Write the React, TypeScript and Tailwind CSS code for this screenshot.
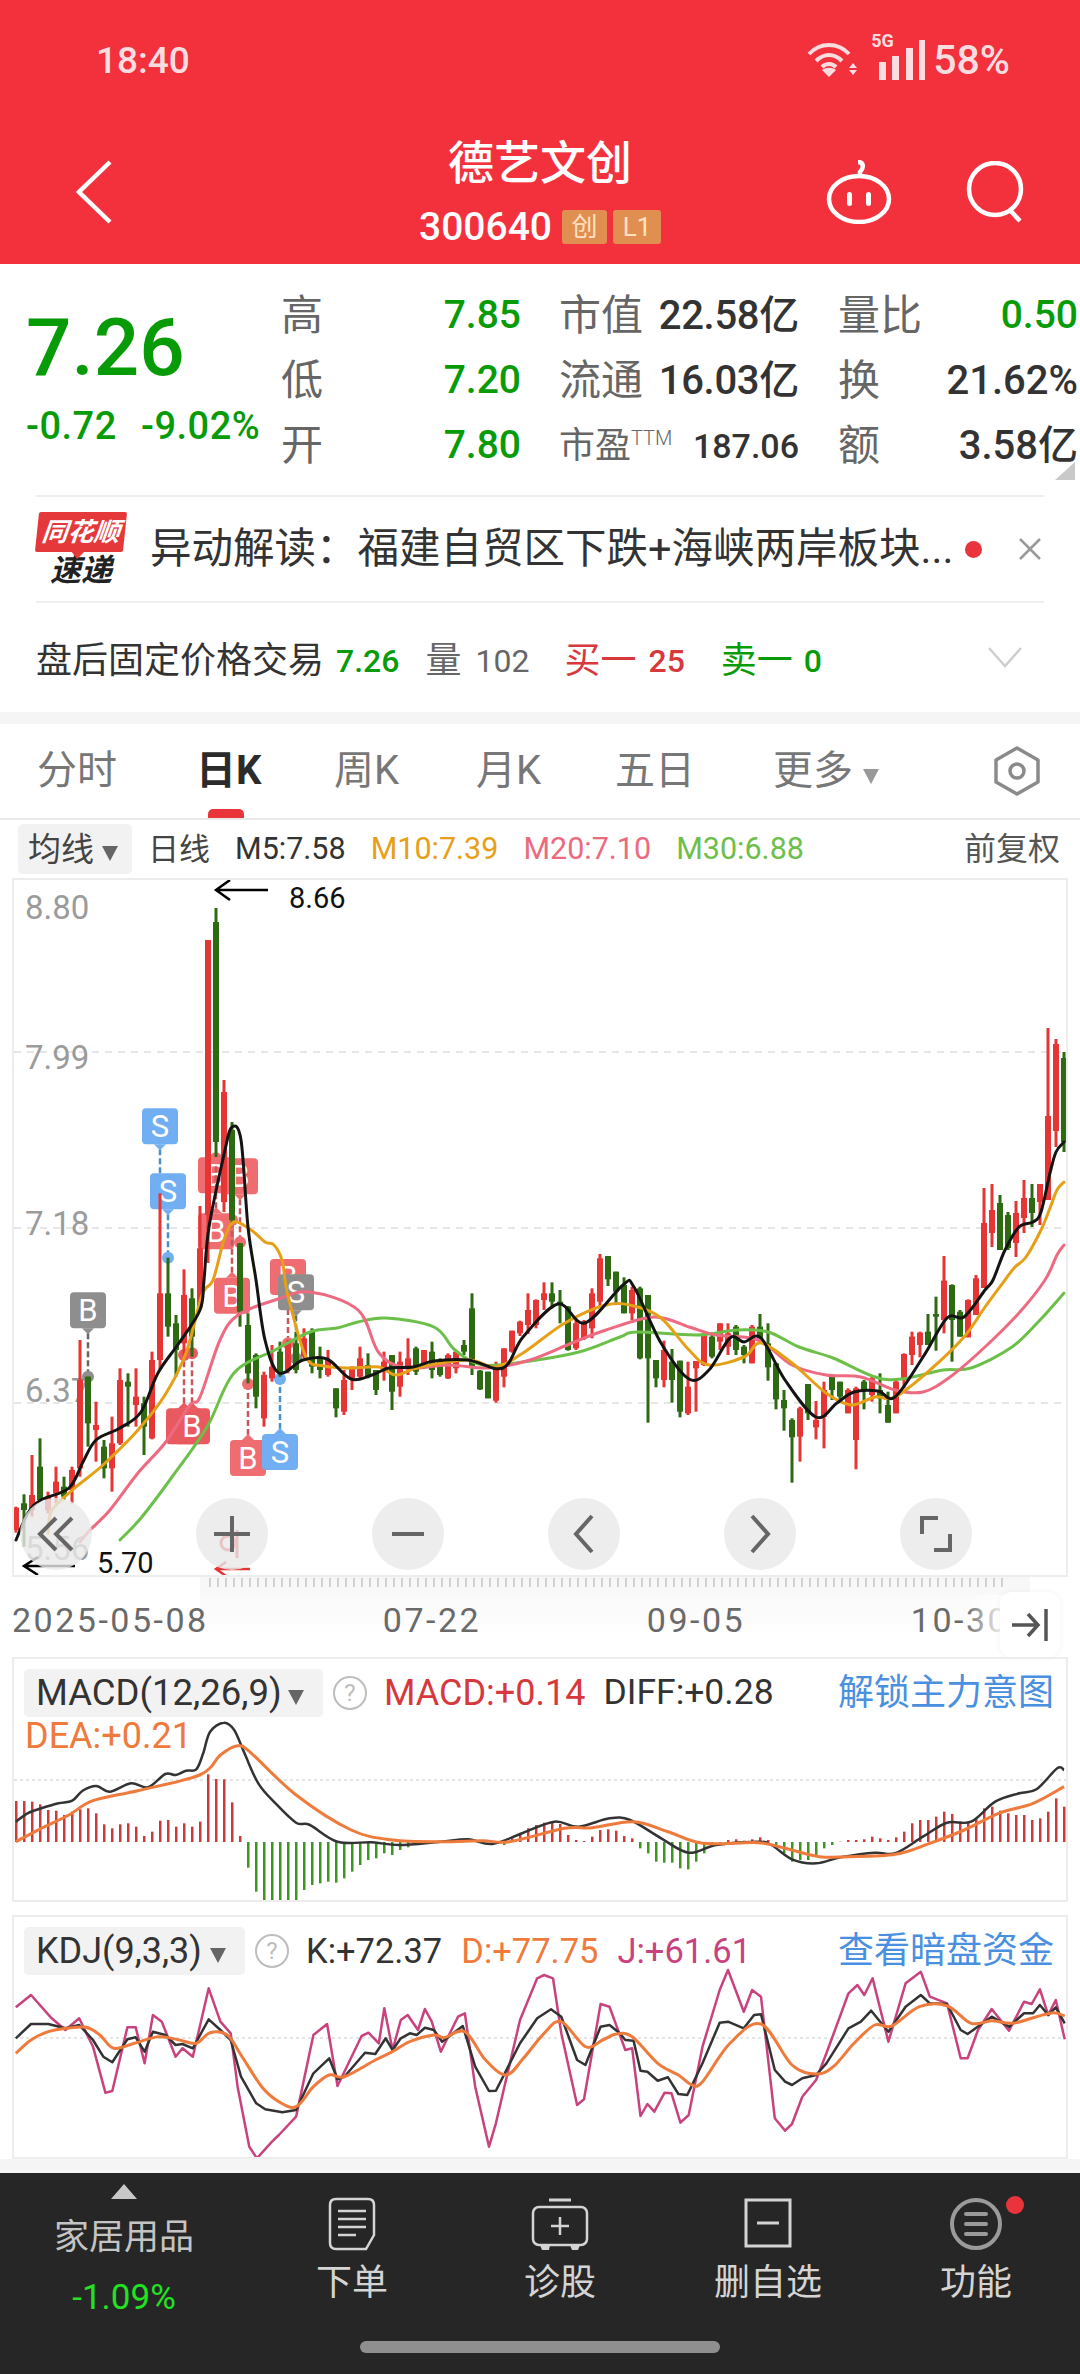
import React from "react";

type Pt = [number, number];
type C = [string, number, number, number, number];

const c9: C[] = [
  ["r",1280,1283,1350,1358],["g",1243,1270,1290,1400],["r",1125,1245,1290,1310],["g",1075,1160,1260,1265],
  ["r",1235,1250,1290,1300],["r",1160,1205,1240,1270],["g",1190,1220,1250,1260],["r",1160,1170,1230,1270],
  ["r",780,900,1165,1190],["g",890,890,1030,1100],["r",965,1035,1050,1145],["g",1080,1100,1165,1195],
  ["r",1010,1090,1165,1235],["r",865,900,1090,1095],["g",880,905,920,1040],["r",865,950,975,1040],
  ["g",950,970,1040,1125],["r",815,840,1075,1078],["r",340,640,840,870],["g",533,640,740,770],
  ["g",705,730,810,890],["r",568,645,790,830],["g",625,655,770,830],["r",378,505,680,685],
  ["r",-420,-420,405,549],["g",-516,-474,186,231],["r",0,36,366,396],["g",126,150,420,430],
  ["g",490,490,695,740],["g",700,735,880,910],["g",820,825,950,985],["r",875,885,1015,1040],
  ["r",795,860,895,905],["g",785,815,880,890],["r",780,790,870,880],["g",755,790,870,880],
  ["r",745,775,830,835],["g",745,755,860,880],["g",800,830,870,895],["r",810,840,885,890],
  ["g",925,925,985,1012],["r",870,900,995,1005],
];

const c10: C[] = [
  ["r",410,410,445,480],["r",350,385,440,445],["g",370,405,440,445],["g",420,420,480,495],["r",365,395,425,452],
  ["g",375,375,485,540],["r",365,395,470,500],["r",325,385,410,435],["g",350,355,425,435],["r",360,360,410,412],
  ["g",335,365,420,445],["g",385,390,435,440],["r",370,375,445,447],["r",365,365,415,430],["g",330,345,365,375],
  ["g",190,235,410,435],["g",420,422,478,480],["g",425,425,505,505],["r",395,410,512,518],["r",355,355,440,472],
  ["r",302,302,365,368],["r",272,275,310,318],["r",190,240,285,312],["r",208,210,285,295],["r",157,190,210,240],
  ["g",157,190,215,235],["g",180,215,225,280],["g",228,230,360,362],["r",270,280,355,360],["r",270,275,325,330],
  ["r",175,190,295,325],["r",72,85,215,230],["g",78,78,148,168],["g",125,125,185,220],["g",142,165,250,250],
  ["r",170,180,250,270],["g",170,175,385,388],["g",195,195,385,578],["g",390,390,445,472],["r",332,360,450,472],
  ["g",357,395,450,518],["g",392,392,545,562],["r",395,470,550,555],["r",393,393,415,545],["r",310,315,405,408],
];

const c11: C[] = [
  ["g",397,410,470,475],["r",370,370,425,450],["r",370,400,440,465],["g",375,380,450,465],["g",435,440,465,490],
  ["r",375,380,490,490],["g",342,380,415,415],["g",370,430,502,542],["g",488,490,598,628],["g",570,600,625,692],
  ["g",655,660,712,848],["r",620,625,710,785],["g",552,552,640,660],["r",603,660,682,718],["r",545,570,650,745],
  ["g",530,530,570,600],["g",545,545,590,600],["r",565,570,640,640],["r",560,565,720,808],["g",540,545,570,628],
  ["r",530,535,585,605],["g",520,570,595,640],["g",575,615,668,668],["r",540,545,640,640],["r",460,462,540,565],
  ["r",395,410,465,495],["r",395,398,435,472],["g",342,395,435,435],["g",290,342,350,452],["r",168,242,360,400],
  ["g",253,255,360,485],["g",330,335,410,410],["r",298,300,412,412],["r",225,235,345,345],
];

const cReal: C[] = [
  ["r",1188,1223,1288,1288],["r",1184,1210,1233,1247],["g",1195,1203,1250,1250],["g",1212,1215,1248,1250],
  ["r",1201,1213,1243,1257],["r",1180,1198,1218,1233],["g",1184,1198,1213,1227],["r",1184,1184,1202,1225],
  ["r",1028,1116,1200,1200],["r",1039,1044,1131,1147],["g",1052,1058,1142,1152],
];

const candles: { x: number; c: string; h: number; t: number; b: number; l: number }[] = [
  ...c9.map((d, i) => ({ x: 16 + 8 * i, c: d[0], h: 1080 + d[1] / 3, t: 1080 + d[2] / 3, b: 1080 + d[3] / 3, l: 1080 + d[4] / 3 })),
  ...c10.map((d, i) => ({ x: 352 + 8 * i, c: d[0], h: 1230 + d[1] / 3, t: 1230 + d[2] / 3, b: 1230 + d[3] / 3, l: 1230 + d[4] / 3 })),
  ...c11.map((d, i) => ({ x: 712 + 8 * i, c: d[0], h: 1200 + d[1] / 3, t: 1200 + d[2] / 3, b: 1200 + d[3] / 3, l: 1200 + d[4] / 3 })),
  ...cReal.map((d, i) => ({ x: 984 + 8 * i, c: d[0], h: d[1], t: d[2], b: d[3], l: d[4] })),
];

const smooth = (p: Pt[]) => {
  let d = `M${p[0][0]} ${p[0][1]}`;
  for (let i = 0; i < p.length - 1; i++) {
    const a = p[Math.max(0, i - 1)], b = p[i], c = p[i + 1], e = p[Math.min(p.length - 1, i + 2)];
    const k = 6;
    d += `C${(b[0] + (c[0] - a[0]) / k).toFixed(1)} ${(b[1] + (c[1] - a[1]) / k).toFixed(1)} ${(c[0] - (e[0] - b[0]) / k).toFixed(1)} ${(c[1] - (e[1] - b[1]) / k).toFixed(1)} ${c[0].toFixed(1)} ${c[1].toFixed(1)}`;
  }
  return d;
};
const poly = (p: Pt[]) => p.map((q) => `${q[0].toFixed(1)},${q[1].toFixed(1)}`).join(" ");

const ma5: Pt[] = [[16,1540],[28,1513],[41,1500],[69,1488],[83,1462],[96,1440],[120,1428],[141,1412],[158,1373],[179,1343],[200,1310],[204,1280],[209,1227],[225,1150],[232,1127],[241,1140],[248,1227],[256,1280],[265,1340],[279,1373],[303,1360],[327,1359],[351,1379],[372,1375],[389,1368],[413,1367],[434,1361],[468,1360],[503,1368],[523,1337],[558,1304],[585,1323],[623,1285],[634,1287],[661,1343],[689,1379],[709,1370],[730,1338],[744,1342],[761,1338],[785,1380],[816,1417],[837,1403],[854,1392],[878,1391],[895,1397],[923,1357],[947,1318],[964,1317],[985,1290],[993,1280],[1005,1250],[1019,1227],[1033,1222],[1041,1212],[1050,1173],[1056,1152],[1064,1142]];
const ma10: Pt[] = [[48,1533],[52,1510],[76,1487],[103,1465],[138,1430],[165,1395],[186,1353],[202,1295],[213,1280],[224,1240],[234,1222],[251,1230],[265,1242],[274,1245],[282,1260],[285,1280],[289,1300],[306,1357],[324,1366],[351,1368],[379,1367],[396,1375],[420,1367],[468,1360],[496,1367],[523,1353],[565,1323],[606,1305],[634,1306],[661,1318],[689,1350],[709,1365],[744,1357],[761,1343],[792,1363],[826,1393],[851,1405],[875,1397],[895,1397],[930,1370],[964,1337],[985,1307],[1005,1280],[1015,1267],[1026,1257],[1041,1230],[1050,1208],[1057,1190],[1064,1182]];
const ma20: Pt[] = [[80,1542],[90,1530],[110,1510],[138,1473],[165,1443],[190,1405],[200,1397],[220,1340],[238,1315],[275,1300],[310,1292],[358,1310],[379,1353],[406,1368],[448,1365],[489,1368],[530,1360],[572,1343],[606,1330],[654,1317],[689,1327],[716,1335],[758,1340],[792,1365],[826,1375],[861,1377],[895,1390],[923,1392],[950,1377],[985,1347],[1019,1313],[1045,1280],[1057,1255],[1064,1245]];
const ma30: Pt[] = [[120,1540],[141,1518],[172,1477],[207,1427],[234,1373],[275,1350],[310,1332],[337,1328],[358,1322],[386,1318],[434,1327],[455,1350],[482,1365],[523,1362],[579,1352],[620,1337],[637,1332],[696,1335],[737,1330],[768,1332],[799,1347],[833,1358],[875,1377],[902,1379],[943,1370],[971,1368],[1012,1347],[1040,1320],[1064,1293]];

const z6 = (p: number[][]): Pt[] => p.map(([x, y]) => [x / 1.452, 1640 + y / 3]);
const z7 = (p: number[][]): Pt[] => p.map(([x, y]) => [x / 1.452, 1900 + y / 3]);

const macdBars = [483,483,485,493,510,512,525,515,508,505,520,553,565,553,550,560,588,575,542,540,560,550,560,545,403,417,418,487,588,683,755,785,785,785,785,780,750,735,730,725,728,715,695,675,660,655,640,645,630,622,615,612,610,608,606,604,602,601,603,602,610,615,595,580,565,555,548,545,552,585,600,603,590,570,568,572,588,595,625,640,665,668,668,685,688,665,640,620,608,600,598,602,598,592,600,625,640,665,660,660,650,625,615,605,600,600,598,590,595,600,592,575,550,540,540,530,515,522,545,545,535,505,500,512,520,525,525,540,535,515,475,500];

const diff = z6([[23,545],[40,520],[60,505],[85,490],[105,482],[120,452],[140,438],[160,455],[190,430],[215,442],[240,402],[255,405],[270,392],[285,388],[295,340],[305,275],[325,248],[340,270],[355,340],[375,430],[400,490],[430,548],[450,555],[490,605],[540,607],[580,615],[640,605],[680,598],[715,612],[760,578],[805,545],[840,560],[885,535],[915,540],[960,595],[1000,638],[1040,615],[1100,605],[1120,615],[1150,658],[1185,670],[1220,652],[1270,638],[1300,640],[1340,590],[1375,548],[1410,545],[1445,485],[1480,460],[1505,448],[1535,385],[1545,390]]);
const dea = z6([[23,605],[60,565],[100,525],[135,482],[200,452],[290,405],[320,345],[345,317],[365,340],[430,465],[510,570],[570,600],[640,605],[700,602],[740,605],[820,565],[860,563],[920,545],[970,575],[1020,610],[1100,608],[1140,625],[1190,650],[1230,650],[1300,643],[1350,610],[1400,570],[1450,520],[1500,490],[1545,440]]);

const kJ = z7([[23,322],[45,285],[75,355],[95,390],[115,355],[135,440],[153,578],[163,573],[185,382],[197,382],[210,490],[222,345],[235,365],[255,470],[265,445],[280,470],[303,265],[320,365],[335,400],[345,560],[362,740],[373,775],[395,725],[405,705],[430,650],[455,405],[475,372],[490,558],[525,408],[535,398],[550,430],[558,325],[570,450],[582,360],[592,345],[607,390],[617,327],[627,365],[640,455],[665,350],[675,340],[690,560],[710,740],[720,670],[755,360],[780,235],[790,225],[803,235],[815,400],[838,615],[848,598],[872,312],[885,320],[908,450],[918,445],[930,648],[940,612],[950,635],[965,578],[975,580],[988,668],[1000,645],[1020,440],[1045,270],[1057,210],[1080,335],[1092,270],[1105,290],[1125,655],[1140,692],[1150,672],[1165,590],[1185,540],[1200,460],[1232,280],[1245,255],[1255,285],[1267,235],[1290,425],[1315,250],[1337,215],[1350,290],[1375,310],[1395,475],[1405,475],[1420,390],[1440,327],[1465,392],[1487,305],[1498,312],[1510,268],[1522,345],[1533,300],[1546,418]]);
const kK = z7([[23,415],[45,372],[70,372],[95,385],[115,375],[135,420],[150,470],[163,487],[185,418],[197,412],[210,455],[222,395],[240,405],[255,435],[265,432],[280,445],[303,358],[320,390],[335,420],[350,530],[372,610],[385,628],[410,637],[430,630],[455,520],[478,475],[490,538],[500,530],[530,458],[545,462],[560,415],[570,450],[582,415],[595,400],[605,405],[617,383],[630,390],[642,425],[672,378],[690,500],[710,573],[720,572],[755,430],[780,355],[800,328],[815,350],[838,480],[850,495],[872,380],[885,375],[900,400],[908,420],[920,422],[930,512],[940,515],[955,542],[970,532],[985,582],[998,585],[1020,490],[1045,368],[1057,365],[1080,385],[1095,345],[1105,343],[1125,510],[1140,545],[1150,555],[1165,535],[1185,525],[1200,490],[1232,385],[1250,365],[1265,332],[1290,395],[1315,320],[1337,285],[1350,310],[1375,312],[1395,390],[1405,402],[1440,350],[1465,380],[1487,340],[1500,340],[1510,315],[1522,345],[1533,322],[1546,370]]);
const kD = z7([[23,460],[45,420],[70,395],[95,385],[125,382],[145,405],[165,445],[195,430],[230,410],[260,420],[285,430],[305,398],[330,405],[350,465],[380,560],[405,605],[430,620],[455,560],[478,525],[500,530],[545,480],[570,455],[595,425],[630,405],[645,413],[675,395],[705,480],[735,525],[760,475],[790,400],[815,365],[850,440],[875,420],[895,402],[918,410],[955,490],[985,525],[1005,555],[1020,545],[1060,430],[1105,372],[1150,495],[1185,522],[1210,500],[1240,430],[1270,375],[1295,378],[1335,320],[1375,317],[1410,370],[1440,362],[1470,370],[1505,350],[1530,338],[1546,348]]);

const R = "#EF6C70", S = "#72AEF2", G = "#8E8E8E";
const markers: [number, number, number, string, string, string][] = [
  [450, 85, 338, S, "S", "#4A90C8"],
  [474, 280, 533, S, "S", "#4A90C8"],
  [234, 637, 890, G, "B", "#666666"],
  [618, 232, 232, R, "B", "#C8565C"],
  [690, 235, 487, R, "B", "#C8565C"],
  [618, 400, 235, R, "B", "#C8565C"],
  [666, 593, 420, R, "B", "#C8565C"],
  [522, 985, 825, "#E85A5F", "B", "#C8565C"],
  [546, 985, 820, "#E85A5F", "B", "#C8565C"],
  [714, 1080, 912, R, "B", "#C8565C"],
  [810, 1062, 897, S, "S", "#4A90C8"],
  [834, 537, 790, R, "B", "#C8565C"],
  [858, 583, 835, G, "S", "#666666"],
];

const NUM = { fontFamily: "Roboto, sans-serif" };

function Marker({ m }: { m: (typeof markers)[number] }) {
  const [zx, zt, zd, col, label, dash] = m;
  const cx = 10 + zx / 3, top = 1080 + zt / 3, dot = 1080 + zd / 3, h = 36, bottom = top + h;
  const up = dot < top;
  const has = zd !== zt;
  return (
    <g>
      {has && <line x1={cx} x2={cx} y1={up ? top - 5 : bottom + 5} y2={dot} stroke={dash} strokeWidth={2.5} strokeDasharray="6 3" />}
      {has && <circle cx={cx} cy={dot} r={6} fill={col} />}
      <rect x={cx - 18} y={top} width={36} height={h} rx={4} fill={col} />
      {has && <polygon points={up ? `${cx - 6},${top} ${cx + 6},${top} ${cx},${top - 6}` : `${cx - 6},${bottom} ${cx + 6},${bottom} ${cx},${bottom + 6}`} fill={col} />}
      <text x={cx} y={top + 29} textAnchor="middle" fontSize={31} fill="#fff" style={NUM}>{label}</text>
    </g>
  );
}

function MainChart() {
  return (
    <svg viewBox="14 880 1052 695" className="block w-[1052px] h-[695px]">
      {[1052, 1228, 1403].map((y) => (
        <line key={y} x1={14} x2={1066} y1={y} y2={y} stroke="#DEDEDE" strokeWidth={1.5} strokeDasharray="7 6" />
      ))}
      <g fill="#9B9B9B" fontSize={33} style={NUM}>
        <text x={25} y={919}>8.80</text>
        <text x={25} y={1069}>7.99</text>
        <text x={25} y={1235}>7.18</text>
        <text x={25} y={1402}>6.37</text>
        <text x={25} y={1560}>5.56</text>
      </g>
      <path d="M268 890H216M230 880L216 890L230 900" fill="none" stroke="#000" strokeWidth={2.5} />
      <text x={289} y={908} fontSize={29} fill="#111" style={NUM}>8.66</text>
      <path d="M75 1566H24M38 1557L24 1566L38 1575" fill="none" stroke="#000" strokeWidth={2.5} />
      <text x={97} y={1573} fontSize={29} fill="#111" style={NUM}>5.70</text>
      <path d="M250 1569H216M226 1562L216 1569L226 1576" fill="none" stroke="#E53535" strokeWidth={2.5} />
      <circle cx={228} cy={1543} r={7} fill="none" stroke="#E53535" strokeWidth={3} />
      <line x1={237} x2={237} y1={1530} y2={1558} stroke="#E53535" strokeWidth={3} />
      {markers.map((m, i) => <Marker key={i} m={m} />)}
      {candles.map((k, i) => {
        const col = k.c === "r" ? "#E53535" : "#2E6A12";
        return (
          <g key={i}>
            <rect x={k.x - 1.5} y={k.h} width={3} height={Math.max(1, k.l - k.h)} fill={col} />
            <rect x={k.x - 3} y={k.t} width={6} height={Math.max(1, k.b - k.t)} fill={col} />
          </g>
        );
      })}
      <g fill="none" strokeWidth={3} strokeLinejoin="round" strokeLinecap="round">
        <path d={smooth(ma30)} stroke="#6CC04A" />
        <path d={smooth(ma20)} stroke="#EE6A80" />
        <path d={smooth(ma10)} stroke="#E6A017" />
        <path d={smooth(ma5)} stroke="#141414" />
      </g>
    </svg>
  );
}

function AxisStrip() {
  const ticks: number[] = [];
  for (let x = 210; x <= 1006; x += 8) ticks.push(x);
  return (
    <svg viewBox="0 1577 1080 80" className="block w-[1080px] h-[80px]">
      <defs>
        <linearGradient id="axf" x1="0" x2="1" y1="0" y2="0">
          <stop offset="0" stopColor="#fff" stopOpacity="0" />
          <stop offset="1" stopColor="#fff" stopOpacity="1" />
        </linearGradient>
        <linearGradient id="axb" x1="0" x2="0" y1="0" y2="1">
          <stop offset="0" stopColor="#F1F1F1" />
          <stop offset="1" stopColor="#fff" />
        </linearGradient>
      </defs>
      <rect x={200} y={1577} width={830} height={60} fill="url(#axb)" opacity={0.6} />
      {ticks.map((x) => {
        const major = x === 432 || x === 696 || x === 960;
        return <line key={x} x1={x} x2={x} y1={1578} y2={major ? 1593 : 1587} stroke={major ? "#8A8A8A" : "#C4C4C4"} strokeWidth={1.5} />;
      })}
      <g fill="#6A6A6A" fontSize={34} style={{ ...NUM, letterSpacing: "2.5px" }}>
        <text x={12} y={1632}>2025-05-08</text>
        <text x={432} y={1632} textAnchor="middle">07-22</text>
        <text x={696} y={1632} textAnchor="middle">09-05</text>
        <text x={960} y={1632} textAnchor="middle">10-30</text>
      </g>
      <rect x={965} y={1595} width={40} height={60} fill="url(#axf)" />
    </svg>
  );
}

function MacdChart() {
  return (
    <svg viewBox="14 1659 1052 241" className="absolute inset-0 w-[1052px] h-[241px]">
      <line x1={14} x2={1066} y1={1780} y2={1780} stroke="#DDD" strokeWidth={1.5} strokeDasharray="3 3" />
      {macdBars.map((v, i) => {
        const y = 1640 + v / 3, base = 1842;
        return <rect key={i} x={15 + 8 * i} y={Math.min(y, base)} width={2.5} height={Math.abs(base - y)} fill={v > 605 ? "#3C9620" : "#C93A3A"} />;
      })}
      <path d={smooth(diff)} fill="none" stroke="#333" strokeWidth={2.5} />
      <path d={smooth(dea)} fill="none" stroke="#EE7A3C" strokeWidth={3} />
    </svg>
  );
}

function KdjChart() {
  return (
    <svg viewBox="14 1917 1052 240" className="absolute inset-0 w-[1052px] h-[240px]">
      <line x1={14} x2={1066} y1={2038} y2={2038} stroke="#DDD" strokeWidth={1.5} strokeDasharray="3 3" />
      <polyline points={poly(kJ)} fill="none" stroke="#C8437E" strokeWidth={2.5} strokeLinejoin="round" />
      <polyline points={poly(kK)} fill="none" stroke="#333" strokeWidth={2.5} strokeLinejoin="round" />
      <path d={smooth(kD)} fill="none" stroke="#EE7A3C" strokeWidth={3} />
    </svg>
  );
}

function Caret({ cls = "border-t-[#666]" }: { cls?: string }) {
  return <span className={`inline-block w-0 h-0 border-l-[8px] border-r-[8px] border-t-[15px] border-l-transparent border-r-transparent ${cls}`} />;
}

function Help() {
  return (
    <span className="flex items-center justify-center w-[34px] h-[34px] rounded-full border-2 border-[#BDBDBD] text-[#BDBDBD] text-[24px] leading-none">?</span>
  );
}

function Cell({ label, value, w, ml, vc }: { label: React.ReactNode; value: string; w: number; ml: number; vc: string }) {
  return (
    <div className="flex items-center justify-between" style={{ width: w, marginLeft: ml }}>
      <span className="text-[42px] leading-none text-[#666]">{label}</span>
      <span className={`leading-none font-medium ${vc}`}>{value}</span>
    </div>
  );
}

const CircBtn = ({ children }: { children: React.ReactNode }) => (
  <div className="w-[72px] h-[72px] rounded-full bg-[#E8E8E8]/80 flex items-center justify-center">{children}</div>
);

function Ic({ d }: { d: string }) {
  return (
    <svg viewBox="0 0 44 44" className="w-[44px] h-[44px]">
      <path d={d} fill="none" stroke="#666" strokeWidth={4} />
    </svg>
  );
}

export default function App() {
  return (
    <div className="w-[1080px] h-[2374px] overflow-hidden bg-white flex flex-col font-['Roboto','Noto_Sans_CJK_SC',sans-serif]">
      {/* header */}
      <div className="h-[264px] bg-[#F2313D] text-white flex flex-col shrink-0">
        <div className="h-[120px] flex items-center justify-between pl-[96px] pr-[70px]">
          <span className="text-[37px] font-medium text-[#FBDDE0] leading-none">18:40</span>
          <div className="flex items-center text-[#FBDDE0]">
            <svg viewBox="0 0 52 40" className="w-[52px] h-[40px] mt-[-2px]">
              <g fill="none" stroke="#FBDDE0" strokeWidth={4}>
                <path d="M2 15C13 3 31 3 42 15" />
                <path d="M9 22C17 14 27 14 35 22" />
                <path d="M15 28C19 24 25 24 29 28" />
              </g>
              <path d="M22 38L15 31C19 28 25 28 29 31Z" fill="#FBDDE0" />
              <path d="M46 24L50 29H42ZM46 36L42 31H50Z" fill="#FBDDE0" />
            </svg>
            <div className="relative w-[58px] h-[40px] ml-[12px]">
              <span className="absolute left-0 top-[-8px] text-[18px] font-bold leading-none">5G</span>
              <svg viewBox="0 0 50 40" className="absolute left-[8px] top-0 w-[50px] h-[40px]">
                <g fill="#FBDDE0">
                  <rect x={0} y={22} width={7} height={18} />
                  <rect x={13} y={16} width={7} height={24} />
                  <rect x={27} y={8} width={7} height={32} />
                  <rect x={40} y={0} width={6} height={40} />
                </g>
              </svg>
            </div>
            <span className="text-[41px] font-medium leading-none ml-[4px]">58%</span>
          </div>
        </div>
        <div className="h-[144px] flex items-center">
          <div className="w-[260px] pl-[76px] shrink-0">
            <svg viewBox="0 0 36 64" className="w-[36px] h-[64px] block">
              <path d="M34 2L3 32L34 62" fill="none" stroke="#fff" strokeWidth={4.5} />
            </svg>
          </div>
          <div className="flex-1 self-start flex flex-col items-center">
            <div className="h-[86px] flex items-center text-[46px] font-medium leading-none">德艺文创</div>
            <div className="h-[42px] flex items-center">
              <span className="text-[39px] font-medium leading-none mr-[10px]">300640</span>
              <span className="w-[45px] h-[34px] rounded-[3px] bg-[#E08F50] text-[#FFE0C2] text-[26px] flex items-center justify-center leading-none">创</span>
              <span className="w-[48px] h-[34px] rounded-[3px] bg-[#E08F50] text-[#FFE0C2] text-[26px] flex items-center justify-center leading-none ml-[6px]">L1</span>
            </div>
          </div>
          <div className="w-[260px] flex items-center pl-[5px] shrink-0">
            <svg viewBox="0 0 70 64" className="w-[70px] h-[64px] block">
              <g fill="none" stroke="#fff" strokeWidth={4.5}>
                <path d="M33 2C39 2 39 8 35 12V16" />
                <ellipse cx={34} cy={39} rx={30} ry={23} />
              </g>
              <rect x={22} y={32} width={5} height={14} rx={2.5} fill="#fff" />
              <rect x={41} y={32} width={5} height={14} rx={2.5} fill="#fff" />
            </svg>
            <svg viewBox="0 0 62 62" className="w-[62px] h-[62px] ml-[70px] block">
              <circle cx={30} cy={28} r={26} fill="none" stroke="#fff" strokeWidth={4.5} />
              <path d="M44 48L55 60" stroke="#fff" strokeWidth={4.5} />
            </svg>
          </div>
        </div>
      </div>

      {/* quote */}
      <div className="h-[231px] flex relative shrink-0">
        <div className="w-[281px] pl-[26px] pt-[40px] shrink-0">
          <div className="text-[80px] leading-[88px] font-medium text-[#089B08]">7.26</div>
          <div className="flex items-center h-[44px] mt-[12px] text-[38px] tracking-[0.5px] font-medium text-[#089B08] leading-none whitespace-nowrap">
            <span className="w-[115px]">-0.72</span>
            <span>-9.02%</span>
          </div>
        </div>
        <div className="flex flex-col pt-[19px]">
          <div className="flex h-[65px] items-center">
            <Cell label="高" value="7.85" w={240} ml={0} vc="text-[39px] text-[#089B08]" />
            <div className="flex items-center justify-between w-[240px] ml-[38px]">
              <span className="text-[42px] leading-none text-[#666]">市值</span>
              <span className="text-[40px] font-medium tracking-[-0.3px] leading-none text-[#333]">22.58亿</span>
            </div>
            <Cell label="量比" value="0.50" w={240} ml={39} vc="text-[39px] text-[#089B08]" />
          </div>
          <div className="flex h-[65px] items-center">
            <Cell label="低" value="7.20" w={240} ml={0} vc="text-[39px] text-[#089B08]" />
            <div className="flex items-center justify-between w-[240px] ml-[38px]">
              <span className="text-[42px] leading-none text-[#666]">流通</span>
              <span className="text-[40px] font-medium tracking-[-0.3px] leading-none text-[#333]">16.03亿</span>
            </div>
            <Cell label="换" value="21.62%" w={240} ml={39} vc="text-[40px] text-[#333]" />
          </div>
          <div className="flex h-[65px] items-center">
            <Cell label="开" value="7.80" w={240} ml={0} vc="text-[39px] text-[#089B08]" />
            <div className="flex items-center justify-between w-[240px] ml-[38px]">
              <span className="flex items-start leading-none text-[#666]">
                <span className="text-[36px] leading-none">市盈</span>
                <span className="text-[20px] leading-none font-light">TTM</span>
              </span>
              <span className="text-[34px] font-medium leading-none text-[#333]">187.06</span>
            </div>
            <Cell label="额" value="3.58亿" w={240} ml={39} vc="text-[40px] text-[#333]" />
          </div>
        </div>
        <svg viewBox="0 0 20 18" className="absolute right-[5px] bottom-[15px] w-[20px] h-[18px]">
          <polygon points="0,18 20,0 20,18" fill="#C9C9C9" />
        </svg>
      </div>

      {/* alert */}
      <div className="mx-[36px] h-[108px] border-y-2 border-[#EFEFEF] flex items-center shrink-0">
        <div className="w-[90px] h-[74px] flex flex-col items-center shrink-0">
          <div className="relative w-[88px] h-[42px] bg-[#E5383B] -skew-x-6 rounded-[2px] flex items-center justify-center text-[#fff] text-[26px] font-bold italic leading-none">
            同花顺
            <span className="absolute left-[36px] bottom-[-7px] w-0 h-0 border-l-[7px] border-r-[7px] border-t-[8px] border-l-transparent border-r-transparent border-t-[#E5383B]" />
          </div>
          <div className="mt-[3px] text-[31px] leading-none font-bold italic text-[#222]">速递</div>
        </div>
        <span className="ml-[24px] w-[806px] text-[41.5px] leading-none text-[#333] whitespace-nowrap">异动解读：福建自贸区下跌+海峡两岸板块...</span>
        <span className="ml-[9px] w-[17px] h-[17px] rounded-full bg-[#E8343A] shrink-0" />
        <svg viewBox="0 0 24 24" className="ml-[36px] w-[24px] h-[24px] shrink-0">
          <path d="M2 2L22 22M22 2L2 22" stroke="#999" strokeWidth={2.5} />
        </svg>
      </div>

      {/* fixed price */}
      <div className="h-[109px] pl-[36px] pt-[7px] flex items-center text-[36px] leading-none whitespace-nowrap shrink-0">
        <span className="text-[#333]">盘后固定价格交易</span>
        <span className="ml-[12px] text-[#089B08] text-[32px] font-medium">7.26</span>
        <span className="ml-[26px] text-[#666]">量</span>
        <span className="ml-[14px] text-[#666] text-[32px]">102</span>
        <span className="ml-[35px] text-[#D6383C]">买一</span>
        <span className="ml-[12px] text-[#D6383C] text-[32px] font-medium">25</span>
        <span className="ml-[36px] text-[#089B08]">卖一</span>
        <span className="ml-[11px] text-[#089B08] text-[32px] font-medium">0</span>
        <svg viewBox="0 0 36 22" className="ml-[165px] w-[36px] h-[22px] mt-[-8px]">
          <path d="M2 2L18 20L34 2" fill="none" stroke="#CFCFCF" strokeWidth={2.5} />
        </svg>
      </div>

      <div className="h-[12px] bg-[#F5F5F5] shrink-0" />

      {/* tabs */}
      <div className="h-[96px] flex border-b-2 border-[#EAEAEA] text-[40px] leading-none text-[#777] whitespace-nowrap shrink-0">
        <div className="ml-[37px] w-[81px] flex items-center">分时</div>
        <div className="ml-[78px] w-[70px] relative flex items-center font-bold text-[#2B2B2B]">
          日K
          <span className="absolute left-[12px] bottom-0 w-[36px] h-[9px] rounded-t-[5px] bg-[#E8343A]" />
        </div>
        <div className="ml-[68px] w-[70px] flex items-center">周K</div>
        <div className="ml-[72px] w-[70px] flex items-center">月K</div>
        <div className="ml-[69px] w-[80px] flex items-center">五日</div>
        <div className="ml-[78px] flex items-center">
          更多
          <span className="ml-[10px]"><Caret cls="border-t-[#999]" /></span>
        </div>
        <div className="ml-[114px] flex items-center">
          <svg viewBox="0 0 48 50" className="w-[48px] h-[50px]">
            <polygon points="24,2 45,14 45,36 24,48 3,36 3,14" fill="none" stroke="#8A8A8A" strokeWidth={3.5} strokeLinejoin="round" />
            <circle cx={24} cy={25} r={7} fill="none" stroke="#8A8A8A" strokeWidth={3.5} />
          </svg>
        </div>
      </div>

      {/* MA row */}
      <div className="h-[58px] pl-[18px] flex items-center whitespace-nowrap leading-none shrink-0">
        <div className="w-[114px] h-[50px] bg-[#F2F2F2] rounded-[5px] flex items-center pl-[10px] text-[33px] text-[#444]">
          均线<span className="ml-[8px]"><Caret /></span>
        </div>
        <span className="ml-[16px] text-[31px] text-[#444]">日线</span>
        <span className="ml-[25px] text-[30.5px] text-[#333]">M5:7.58</span>
        <span className="ml-[25px] text-[30.5px] text-[#E6A017]">M10:7.39</span>
        <span className="ml-[25px] text-[30.5px] text-[#EC6A80]">M20:7.10</span>
        <span className="ml-[25px] text-[30.5px] text-[#6CC04A]">M30:6.88</span>
        <span className="ml-auto mr-[20px] text-[32px] text-[#555]">前复权</span>
      </div>

      {/* main chart */}
      <div className="relative mx-[12px] w-[1056px] h-[699px] border-2 border-[#EDEDED] shrink-0">
        <MainChart />
        <div className="absolute left-[6px] top-[618px] flex gap-[104px]">
          <CircBtn><Ic d="M22 6L6 22L22 38M38 6L22 22L38 38" /></CircBtn>
          <CircBtn><Ic d="M22 4V40M4 22H40" /></CircBtn>
          <CircBtn><Ic d="M6 22H38" /></CircBtn>
          <CircBtn><Ic d="M30 4L14 22L30 40" /></CircBtn>
          <CircBtn><Ic d="M14 4L30 22L14 40" /></CircBtn>
          <CircBtn><Ic d="M24 6H8V22M20 38H36V22" /></CircBtn>
        </div>
      </div>

      {/* axis */}
      <div className="relative h-[80px] shrink-0">
        <AxisStrip />
        <div className="absolute left-[1000px] top-[15px] w-[60px] h-[65px] rounded-[12px] bg-white shadow-[0_0_6px_rgba(0,0,0,0.06)] flex items-center justify-center">
          <svg viewBox="0 0 40 40" className="w-[40px] h-[40px]">
            <path d="M2 20H28M18 9L28 20L18 31M36 4V36" fill="none" stroke="#555" strokeWidth={3.5} />
          </svg>
        </div>
      </div>

      {/* MACD */}
      <div className="relative mx-[12px] w-[1056px] h-[245px] border-2 border-[#EDEDED] shrink-0">
        <MacdChart />
        <div className="relative flex items-center pl-[10px] pt-[10px] leading-none whitespace-nowrap">
          <div className="w-[299px] h-[48px] bg-[#F2F2F2] rounded-[5px] flex items-center pl-[12px] text-[36.5px] text-[#333]">
            MACD(12,26,9)<span className="ml-[6px]"><Caret /></span>
          </div>
          <span className="ml-[10px]"><Help /></span>
          <span className="ml-[17px] text-[36px] text-[#D6383C]">MACD:+0.14</span>
          <span className="ml-[18px] text-[35.5px] text-[#333]">DIFF:+0.28</span>
          <span className="ml-auto mr-[12px] text-[36px] text-[#4A90E0]">解锁主力意图</span>
        </div>
        <div className="relative pl-[11px] mt-[1px] text-[36px] leading-none text-[#EE7A3C]">DEA:+0.21</div>
      </div>

      <div className="h-[13px] shrink-0" />

      {/* KDJ */}
      <div className="relative mx-[12px] w-[1056px] h-[244px] border-2 border-[#EDEDED] shrink-0">
        <KdjChart />
        <div className="relative flex items-center pl-[10px] pt-[10px] leading-none whitespace-nowrap">
          <div className="w-[221px] h-[48px] bg-[#F2F2F2] rounded-[5px] flex items-center pl-[12px] text-[36px] text-[#333]">
            KDJ(9,3,3)<span className="ml-[8px]"><Caret /></span>
          </div>
          <span className="ml-[10px]"><Help /></span>
          <span className="ml-[17px] text-[34.5px] text-[#333]">K:+72.37</span>
          <span className="ml-[19px] text-[34.5px] text-[#EE7A3C]">D:+77.75</span>
          <span className="ml-[19px] text-[34.5px] text-[#C8437E]">J:+61.61</span>
          <span className="ml-auto mr-[12px] text-[36px] text-[#4A90E0]">查看暗盘资金</span>
        </div>
      </div>

      <div className="h-[14px] bg-[#F5F5F5] shrink-0" />

      {/* bottom */}
      <div className="flex-1 bg-[#262626] relative flex flex-col">
        <div className="flex h-[168px] text-[#D4D4D4] leading-none whitespace-nowrap">
          <div className="w-[248px] flex flex-col items-center pt-[11px]">
            <span className="w-0 h-0 border-l-[13px] border-r-[13px] border-b-[15px] border-l-transparent border-r-transparent border-b-[#C8C8C8]" />
            <span className="mt-[21px] text-[35px] text-[#C4C4C4]">家居用品</span>
            <span className="mt-[25px] text-[35px] text-[#22E322]">-1.09%</span>
          </div>
          <div className="w-[208px] flex flex-col items-center pt-[24px]">
            <svg viewBox="0 0 48 54" className="w-[48px] h-[54px]">
              <path d="M8 2H40Q46 2 46 8V38L38 52H8Q2 52 2 46V8Q2 2 8 2Z" fill="none" stroke="#D4D4D4" strokeWidth={2.5} />
              <path d="M10 14H38M10 22H38M10 30H38M10 38H28" stroke="#D4D4D4" strokeWidth={2.5} />
            </svg>
            <span className="mt-[14px] text-[36px]">下单</span>
          </div>
          <div className="w-[208px] flex flex-col items-center pt-[24px]">
            <svg viewBox="0 0 58 54" className="w-[58px] h-[54px]">
              <path d="M18 3H40" stroke="#D4D4D4" strokeWidth={3} />
              <rect x={2} y={10} width={54} height={38} rx={6} fill="none" stroke="#D4D4D4" strokeWidth={2.5} />
              <path d="M29 20V38M20 29H38" stroke="#D4D4D4" strokeWidth={2.5} />
              <path d="M9 48H19L18 53H11ZM39 48H49L47 53H41Z" fill="#D4D4D4" />
            </svg>
            <span className="mt-[14px] text-[36px]">诊股</span>
          </div>
          <div className="w-[208px] flex flex-col items-center pt-[24px]">
            <svg viewBox="0 0 48 54" className="w-[48px] h-[54px]">
              <rect x={2} y={3} width={44} height={46} fill="none" stroke="#D4D4D4" strokeWidth={3} />
              <path d="M13 26H35" stroke="#D4D4D4" strokeWidth={3} />
            </svg>
            <span className="mt-[14px] text-[36px]">删自选</span>
          </div>
          <div className="w-[208px] relative flex flex-col items-center pt-[24px]">
            <svg viewBox="0 0 54 54" className="w-[54px] h-[54px]">
              <circle cx={27} cy={27} r={24} fill="none" stroke="#9A9A9A" strokeWidth={4} />
              <path d="M17 17H37M17 27H37M17 37H37" stroke="#9A9A9A" strokeWidth={4} strokeLinecap="round" />
            </svg>
            <span className="absolute left-[134px] top-[23px] w-[18px] h-[18px] rounded-full bg-[#E8343A]" />
            <span className="mt-[14px] text-[36px]">功能</span>
          </div>
        </div>
        <div className="mx-auto w-[360px] h-[12px] rounded-full bg-[#8F8F8F]" />
      </div>
    </div>
  );
}
